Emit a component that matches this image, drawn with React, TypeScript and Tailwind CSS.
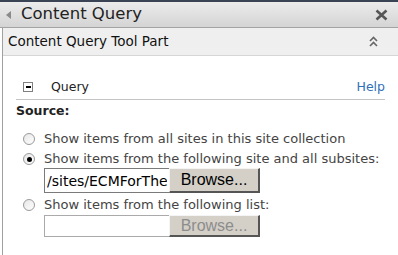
import React from 'react';

const verdana = { fontFamily: '"DejaVu Sans", Verdana, sans-serif' };

const Radio = ({ checked }: { checked?: boolean }) => (
  <span className="relative inline-block h-[12px] w-[12px] shrink-0 rounded-full border border-[#9a9a9a] bg-gradient-to-br from-[#e6e6e6] to-white">
    {checked && (
      <span className="absolute left-[2.5px] top-[2.5px] h-[5px] w-[5px] rounded-full bg-black" />
    )}
  </span>
);

const BrowseButton = ({ disabled }: { disabled?: boolean }) => (
  <button
    className={`h-full w-[91px] border-t border-l border-[#f4f4f4] border-r-2 border-b-2 border-r-[#555] border-b-[#555] bg-[#d4d0c8] text-[16px] ${
      disabled ? 'text-[#8c8c8c]' : 'text-black'
    }`}
    style={{ fontFamily: '"Liberation Sans", Arial, sans-serif' }}
  >
    Browse...
  </button>
);

const App = () => {
  return (
    <div className="h-[255px] w-[398px] overflow-hidden bg-white leading-normal" style={verdana}>
      {/* title bar */}
      <div className="h-[2px] bg-[#3b4454]" />
      <div className="flex h-[26px] items-center border-b border-[#a3a3a3] bg-gradient-to-b from-[#ececec] to-[#d4d4d4] pl-[6px] pr-[10px]">
        <svg width="6" height="8" viewBox="0 0 6 8" className="mr-[9px]">
          <path d="M5 0 L0 4 L5 8 Z" fill="#8a8a8a" />
        </svg>
        <span className="text-[16.5px] leading-none text-[#222]">Content Query</span>
        <svg width="13" height="12" viewBox="0 0 13 12" className="ml-auto">
          <path d="M1.5 1.5 L11.5 10.5 M11.5 1.5 L1.5 10.5" stroke="#555" strokeWidth="2.6" />
        </svg>
      </div>

      <div className="ml-[2px] h-[227px] border-l border-[#a0a0a0]">
        <div className="flex h-[28px] items-center border-b border-[#d6d6d6] bg-[#efefef] pl-[5px] pr-[20px]">
          <span className="text-[13.5px] text-[#111]">Content Query Tool Part</span>
          <svg width="9" height="11" viewBox="0 0 9 11" className="ml-auto">
            <path d="M1 5 L4.5 1.5 L8 5 M1 10 L4.5 6.5 L8 10" stroke="#666" strokeWidth="1.6" fill="none" />
          </svg>
        </div>

        <div className="pl-[13px] pr-[13px] pt-[20px]">
          <div className="box-content flex h-[22px] items-center border-b border-[#c4c4c4] pb-[1px] pl-[7px]">
            <span className="flex h-[10px] w-[10px] items-center justify-center border border-[#808080] bg-white">
              <span className="h-[2px] w-[5px] bg-black" />
            </span>
            <span className="ml-[18px] text-[12.5px] leading-[16px] text-[#222]">Query</span>
            <span className="ml-auto text-[12.5px] leading-[16px] text-[#2f6fba]">Help</span>
          </div>
          <div className="mt-[3px] text-[12.5px] font-bold leading-[16px] text-[#222]">Source:</div>

          <div className="mt-[11px] pl-[7px] text-[13px] leading-[18px] text-[#444]">
            <div className="flex items-center gap-[9px]">
              <Radio />
              <span>Show items from all sites in this site collection</span>
            </div>
            <div className="mt-[2px] flex items-center gap-[9px]">
              <Radio checked />
              <span>Show items from the following site and all subsites:</span>
            </div>
            <div className="ml-[21px] flex h-[25px] items-stretch">
              <input
                readOnly
                value="/sites/ECMForTheMasses"
                className="w-[125px] border border-r-0 border-[#7a7a7a] bg-white px-[2px] text-[14px] text-black outline-none"
                style={verdana}
              />
              <BrowseButton />
            </div>
            <div className="mt-[3px] flex items-center gap-[9px]">
              <Radio />
              <span>Show items from the following list:</span>
            </div>
            <div className="ml-[21px] mt-[1px] flex h-[22px] items-stretch">
              <div className="w-[125px] border border-r-0 border-[#aaa] bg-white" />
              <BrowseButton disabled />
            </div>
          </div>
        </div>
      </div>
    </div>
  );
};

export default App;
